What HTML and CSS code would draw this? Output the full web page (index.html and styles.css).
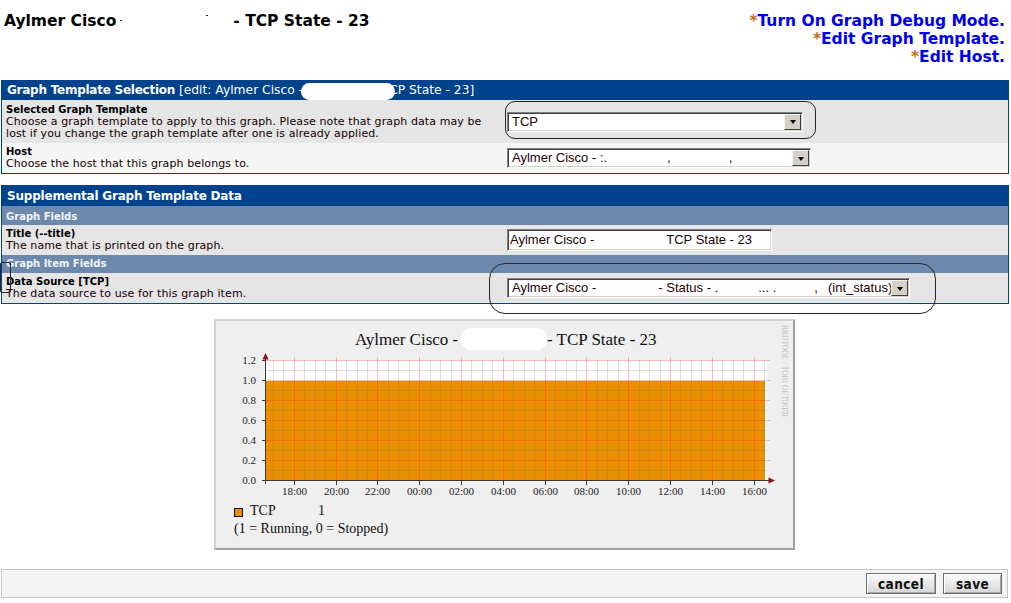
FILE: index.html
```html
<!DOCTYPE html>
<html>
<head>
<meta charset="utf-8">
<title>Graph Management</title>
<link rel="stylesheet" href="styles.css">
</head>
<body>
<div class="page">
  <header class="top">
    <h1 class="page-title">Aylmer Cisco<span class="gap"></span>- TCP State - 23</h1>
    <div class="links">
      <div><span class="star">*</span><a href="#">Turn On Graph Debug Mode.</a></div>
      <div><span class="star">*</span><a href="#">Edit Graph Template.</a></div>
      <div><span class="star">*</span><a href="#">Edit Host.</a></div>
    </div>
  </header>

  <section class="box box-1">
    <div class="box-head"><b class="head-title">Graph Template Selection</b> <span class="head-edit">[edit: Aylmer Cisco -<span class="blob"></span>CP State - 23]</span></div>
    <div class="row row-dark">
      <div class="label label-tall">
        <div class="name">Selected Graph Template</div>
        <div class="desc">Choose a graph template to apply to this graph. Please note that graph data may be<br>lost if you change the graph template after one is already applied.</div>
      </div>
      <div class="control">
        <div class="select w-tcp"><span class="val">TCP</span><span class="arrow"></span></div>
      </div>
    </div>
    <div class="row row-light">
      <div class="label">
        <div class="name">Host</div>
        <div class="desc">Choose the host that this graph belongs to.</div>
      </div>
      <div class="control">
        <div class="select w-host"><span class="val">Aylmer Cisco - :.<span class="sp s60"></span>,<span class="sp s58"></span>,</span><span class="arrow"></span></div>
      </div>
    </div>
  </section>

  <section class="box box-2">
    <div class="box-head box-head-2"><b>Supplemental Graph Template Data</b></div>
    <div class="sub-head">Graph Fields</div>
    <div class="row row-dark">
      <div class="label">
        <div class="name">Title (--title)</div>
        <div class="desc">The name that is printed on the graph.</div>
      </div>
      <div class="control">
        <div class="textbox w-title"><span class="val">Aylmer Cisco -<span class="sp s72"></span>TCP State - 23</span></div>
      </div>
    </div>
    <div class="sub-head sub-head-2">Graph Item Fields</div>
    <div class="row row-dark">
      <div class="label">
        <div class="name">Data Source [TCP]</div>
        <div class="desc">The data source to use for this graph item.</div>
      </div>
      <div class="control">
        <div class="select w-ds"><span class="val">Aylmer Cisco -<span class="sp s62"></span>- Status - .<span class="sp s40"></span>... .<span class="sp s38"></span>,<span class="sp s10"></span>(int_status)</span><span class="arrow"></span></div>
      </div>
    </div>
  </section>

  <div class="graph">
    <svg width="577" height="227" viewBox="0 0 577 227" xmlns="http://www.w3.org/2000/svg" font-family="'Liberation Serif', 'Times New Roman', serif">
      <text x="139" y="24" font-size="17" fill="#111">Aylmer Cisco -</text>
      <rect x="245" y="7" width="86" height="22" rx="11" fill="#ffffff"/>
      <text x="331" y="24" font-size="17" fill="#111">- TCP State - 23</text>

      <rect x="50" y="39" width="501" height="121" fill="#ffffff"/>
      <rect x="50" y="60" width="499" height="100" fill="#ea8f00"/>

      <path stroke="rgba(110,110,110,0.22)" stroke-width="1" fill="none" d="M57.5 39V160M67.5 39V160M88.5 39V160M99.5 39V160M109.5 39V160M130.5 39V160M141.5 39V160M151.5 39V160M172.5 39V160M182.5 39V160M193.5 39V160M214.5 39V160M224.5 39V160M235.5 39V160M255.5 39V160M266.5 39V160M276.5 39V160M297.5 39V160M308.5 39V160M318.5 39V160M339.5 39V160M350.5 39V160M360.5 39V160M381.5 39V160M391.5 39V160M402.5 39V160M423.5 39V160M433.5 39V160M444.5 39V160M464.5 39V160M475.5 39V160M485.5 39V160M506.5 39V160M517.5 39V160M527.5 39V160M548.5 39V160M50 149.5H551M50 129.5H551M50 109.5H551M50 89.5H551M50 69.5H551M50 49.5H551"/>
      <path stroke="rgba(255,40,40,0.3)" stroke-width="1" fill="none" d="M78.5 36V160M120.5 36V160M161.5 36V160M203.5 36V160M245.5 36V160M287.5 36V160M329.5 36V160M370.5 36V160M412.5 36V160M454.5 36V160M496.5 36V160M538.5 36V160M50 139.5H554M50 119.5H554M50 99.5H554M50 79.5H554M50 59.5H554M50 39.5H554"/>

      <path stroke="#3a3a3a" stroke-width="1" fill="none" d="M49.5 37V163M46 159.5H553M46 139.5H49.5M46 119.5H49.5M46 99.5H49.5M46 79.5H49.5M46 59.5H49.5M46 39.5H49.5M78.5 159.5V164M120.5 159.5V164M161.5 159.5V164M203.5 159.5V164M245.5 159.5V164M287.5 159.5V164M329.5 159.5V164M370.5 159.5V164M412.5 159.5V164M454.5 159.5V164M496.5 159.5V164M538.5 159.5V164"/>
      <polygon points="49.5,32 46.5,38.5 52.5,38.5" fill="#8a1010"/>
      <polygon points="559,159.5 552.5,156.5 552.5,162.5" fill="#8a1010"/>

      <g font-size="11" fill="#222" text-anchor="end">
        <text x="40" y="43">1.2</text>
        <text x="40" y="63">1.0</text>
        <text x="40" y="83">0.8</text>
        <text x="40" y="103">0.6</text>
        <text x="40" y="123">0.4</text>
        <text x="40" y="143">0.2</text>
        <text x="40" y="163">0.0</text>
      </g>
      <g font-size="11" fill="#222" text-anchor="middle">
        <text x="78.5" y="174">18:00</text>
        <text x="120.5" y="174">20:00</text>
        <text x="161.5" y="174">22:00</text>
        <text x="203.5" y="174">00:00</text>
        <text x="245.5" y="174">02:00</text>
        <text x="287.5" y="174">04:00</text>
        <text x="329.5" y="174">06:00</text>
        <text x="370.5" y="174">08:00</text>
        <text x="412.5" y="174">10:00</text>
        <text x="454.5" y="174">12:00</text>
        <text x="496.5" y="174">14:00</text>
        <text x="538.5" y="174">16:00</text>
      </g>

      <rect x="18.5" y="187.5" width="8" height="8" fill="#ea8f00" stroke="#111" stroke-width="1"/>
      <text x="34" y="194" font-size="14" fill="#111">TCP</text>
      <text x="102" y="194" font-size="14" fill="#111">1</text>
      <text x="18" y="212" font-size="14" fill="#111">(1 = Running, 0 = Stopped)</text>

      <text transform="translate(566 4) rotate(90)" font-size="7.5" fill="#bdbdbd">RRDTOOL / TOBI OETIKER</text>
    </svg>
  </div>

  <div class="actions">
    <button class="btn btn-cancel" type="button">cancel</button>
    <button class="btn btn-save" type="button">save</button>
  </div>

  <div class="anno anno-tcp"></div>
  <div class="anno anno-ds"></div>
  <div class="anno anno-side"></div>
</div>
</body>
</html>
```

FILE: styles.css
```css
html, body {
  margin: 0;
  padding: 0;
  background: #ffffff;
}

body {
  font-family: "DejaVu Sans", Verdana, sans-serif;
  color: #000;
}

.page {
  position: relative;
  width: 1011px;
}

/* ---------- top heading ---------- */
.top {
  display: flex;
  justify-content: space-between;
  align-items: flex-start;
  height: 68px;
  padding: 12px 6px 0 4px;
}

.page-title {
  margin: 0;
  font-size: 15.5px;
  font-weight: bold;
  line-height: 18px;
  white-space: nowrap;
}

.gap {
  position: relative;
  display: inline-block;
  width: 117px;
  height: 10px;
}

.gap::before,
.gap::after {
  content: "";
  position: absolute;
  width: 2px;
  height: 1px;
  background: #222;
}

.gap::before { left: 4px; top: 4px; }
.gap::after { left: 90px; top: -1px; }

.links {
  text-align: right;
  font-size: 15.5px;
  font-weight: bold;
  line-height: 18px;
}

.links a {
  color: #0000f0;
  text-decoration: none;
}

.star {
  color: #c16921;
}

/* ---------- boxes ---------- */
.box {
  margin: 0 2px 0 1px;
  border: 1px solid #00438c;
}

.box-2 {
  margin-top: 11px;
}

.box-head {
  height: 19px;
  line-height: 19px;
  padding-left: 5px;
  background: #00438c;
  color: #ffffff;
  font-size: 12px;
  white-space: nowrap;
}

.head-title {
  letter-spacing: -0.25px;
}

.head-edit {
  font-size: 12.3px;
}

.box-head-2 {
  height: 20px;
  line-height: 20px;
  letter-spacing: -0.2px;
}

.blob {
  position: relative;
  z-index: 1;
  display: inline-block;
  width: 94px;
  height: 17px;
  margin: 0 -6px 0 -2px;
  border-radius: 9px;
  background: #ffffff;
  vertical-align: -6px;
}

.sub-head {
  height: 19px;
  line-height: 21px;
  padding-left: 4px;
  background: #6d88ad;
  color: #f2f4f8;
  font-size: 10px;
  font-weight: bold;
}

.sub-head-2 {
  height: 18px;
  line-height: 18px;
}

.row {
  display: grid;
  grid-template-columns: 503px 1fr;
  align-items: center;
}

.row-dark { background: #e5e5e5; }
.row-light { background: #f5f5f5; }

.label {
  padding: 3px 4px 3px 4px;
  font-size: 10px;
  line-height: 12px;
  white-space: nowrap;
}

.label-tall {
  padding-top: 4px;
}

.name {
  font-weight: bold;
}

.desc {
  color: #140000;
  font-size: 11px;
  letter-spacing: 0.1px;
}

.control {
  padding-left: 2px;
  display: flex;
}

/* ---------- form controls ---------- */
.select,
.textbox {
  display: flex;
  box-sizing: border-box;
  height: 20px;
  border: 1px solid;
  border-color: #808080 #ffffff #ffffff #808080;
  box-shadow: inset 1px 1px 0 #404040, inset -1px -1px 0 #d4d0c8;
  background: #ffffff;
  font-family: "Liberation Sans", Arial, sans-serif;
  font-size: 13px;
  color: #1a0000;
}

.textbox {
  height: 22px;
}

.val {
  flex: 1;
  padding: 0 0 0 4px;
  line-height: 18px;
  white-space: pre;
  overflow: hidden;
}

.textbox .val {
  line-height: 20px;
  padding-left: 2px;
}

.arrow {
  display: flex;
  align-items: center;
  justify-content: center;
  box-sizing: border-box;
  width: 17px;
  height: 16px;
  margin: 1px 1px 1px 0;
  border: 1px solid;
  border-color: #f4f4f4 #404040 #404040 #f4f4f4;
  background: #d4d0c8;
}

.arrow::after {
  content: "";
  border-left: 3.5px solid transparent;
  border-right: 3.5px solid transparent;
  border-top: 4px solid #000;
  margin-top: 1px;
}

.sp { display: inline-block; }
.s10 { width: 10px; }
.s38 { width: 38px; }
.s40 { width: 40px; }
.s58 { width: 58px; }
.s60 { width: 60px; }
.s62 { width: 62px; }
.s72 { width: 72px; }

.w-tcp { width: 296px; }
.w-host { width: 304px; }
.w-title { width: 265px; }
.w-ds { width: 403px; }

/* ---------- graph ---------- */
.graph {
  width: 577px;
  margin: 15px 0 0 214px;
  border: 2px solid;
  border-color: #d2d2d2 #a0a0a0 #a0a0a0 #d2d2d2;
  background: #efefef;
}

.graph svg {
  display: block;
}

/* ---------- action bar ---------- */
.actions {
  display: flex;
  justify-content: flex-end;
  align-items: center;
  gap: 7px;
  box-sizing: border-box;
  height: 29px;
  margin: 19px 3px 0 1px;
  padding-right: 5px;
  border: 1px solid #c6c6c6;
  background: #f4f4f4;
}

.btn {
  height: 21px;
  padding: 0;
  border: 1px solid #6e6e6e;
  background: linear-gradient(#fbfbfb, #d6d6d6);
  box-shadow: inset 1px 1px 0 #ffffff, inset -1px -1px 0 #a8a8a8;
  font-family: "DejaVu Sans Condensed", "DejaVu Sans", sans-serif;
  font-weight: bold;
  font-size: 13.5px;
  letter-spacing: 0.4px;
  color: #111;
}

.btn-cancel { width: 70px; }
.btn-save { width: 59px; }

/* ---------- annotations drawn over the screenshot ---------- */
.anno {
  position: absolute;
  border: 1px solid #262626;
  pointer-events: none;
}

.anno-tcp {
  left: 505px;
  top: 101px;
  width: 309px;
  height: 36px;
  border-radius: 10px;
}

.anno-ds {
  left: 489px;
  top: 263px;
  width: 445px;
  height: 49px;
  border-radius: 16px;
}

.anno-side {
  left: 0;
  top: 262px;
  width: 9px;
  height: 29px;
  border-radius: 2px;
}
```
